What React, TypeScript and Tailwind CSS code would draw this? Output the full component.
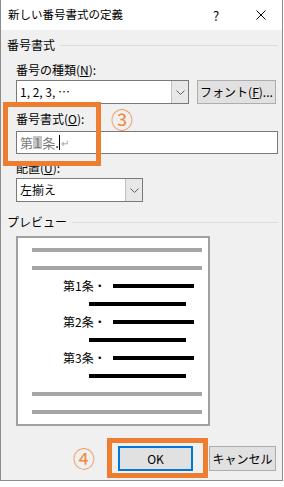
const Chevron = () => (
  <svg width="9" height="5" viewBox="0 0 9 5">
    <path d="M0.5 0.5 L4.5 4.5 L8.5 0.5" fill="none" stroke="#606060" strokeWidth="1" />
  </svg>
);

const GrayLine = () => (
  <div className="flex h-[18px] items-center pl-[14px]">
    <div className="h-[4px] w-[170px] bg-[#a5a5a5]" />
  </div>
);

const BlackLine = () => (
  <div className="flex h-[18px] items-center pl-[71px]">
    <div className="h-[4px] w-[97px] bg-black" />
  </div>
);

const Item = ({ label }: { label: string }) => (
  <div className="flex h-[18px] items-center pl-[45px]">
    <span className="w-[50px] text-[12px] leading-none text-black">{label}・</span>
    <div className="h-[4px] w-[81px] bg-black" />
  </div>
);

const App = () => {
  return (
    <div className="h-[487px] w-[284px] bg-white font-['Noto_Sans_CJK_JP',sans-serif] text-[12px] text-black">
      <div className="relative flex h-[481px] w-[283px] flex-col border-x border-b border-[#8c8c8c]">
        {/* title bar */}
        <div className="flex h-[30px] shrink-0 items-center bg-white pl-[7px] pr-[16px]">
          <span className="text-[11.5px] leading-none">新しい番号書式の定義</span>
          <span className="ml-auto w-[8px] text-center text-[13px] leading-none">?</span>
          <svg className="ml-[36px]" width="10" height="10" viewBox="0 0 10 10">
            <path d="M0.5 0.5 L9.5 9.5 M9.5 0.5 L0.5 9.5" stroke="#000" strokeWidth="1" />
          </svg>
        </div>

        {/* body */}
        <div className="flex flex-1 flex-col bg-[#f0f0f0]">
          <div className="mt-[7px] flex h-4 items-center gap-[5px] pl-[6px] pr-[4px]">
            <span className="leading-none">番号書式</span>
            <div className="h-px flex-1 bg-[#dcdcdc]" />
          </div>

          <div className="mt-[9px] flex h-4 items-center pl-[15px] leading-none">
            番号の種類(<span className="underline">N</span>):
          </div>

          <div className="mt-[2px] flex h-[24px] gap-[8px] pl-[15px]">
            <div className="flex w-[173px] border border-[#7a7a7a] bg-white">
              <span className="flex flex-1 items-center pl-[3px] text-[12px] leading-none">1, 2, 3, …</span>
              <div className="flex w-[17px] items-center justify-center border-l border-[#c0c0c0] bg-[#e8e8e8]">
                <Chevron />
              </div>
            </div>
            <button className="flex w-[79px] items-center justify-center border border-[#adadad] bg-[#e1e1e1] leading-none">
              フォント(<span className="underline">F</span>)...
            </button>
          </div>

          <div className="mt-[7px] flex h-4 items-center pl-[15px] leading-none">
            番号書式(<span className="underline">O</span>):
          </div>

          <div className="ml-[15px] mt-[4px] flex h-[23px] w-[262px] items-center border border-[#7a7a7a] bg-white pl-[3px] text-[13px] leading-none">
            <span className="text-[#7a7a7a]">第</span>
            <span className="bg-[#c4c4c4] px-[1px] text-[#7a7a7a]">1</span>
            <span className="text-[#7a7a7a]">条</span>
            <span>.</span>
            <span className="h-[15px] w-px bg-black" />
            <span className="ml-[1px] text-[10px] text-[#a0a0a0]">↵</span>
          </div>

          <div className="mt-[6px] flex h-4 items-center pl-[15px] leading-none">
            配置(<span className="underline">U</span>):
          </div>

          <div className="ml-[15px] mt-[2px] flex h-[24px] w-[127px] border border-[#7a7a7a] bg-white">
            <span className="flex flex-1 items-center pl-[3px] leading-none">左揃え</span>
            <div className="flex w-[17px] items-center justify-center border-l border-[#c0c0c0] bg-[#e8e8e8]">
              <Chevron />
            </div>
          </div>

          <div className="mt-[12px] flex h-4 items-center gap-[5px] pl-[6px] pr-[4px]">
            <span className="leading-none">プレビュー</span>
            <div className="h-px flex-1 bg-[#dcdcdc]" />
          </div>

          {/* preview */}
          <div className="ml-[15px] mt-[6px] flex h-[190px] w-[194px] flex-col border-2 border-[#a0a0a0] bg-white py-[3px]">
            <GrayLine />
            <GrayLine />
            <Item label="第1条" />
            <BlackLine />
            <Item label="第2条" />
            <BlackLine />
            <Item label="第3条" />
            <BlackLine />
            <GrayLine />
            <GrayLine />
          </div>

          <div className="mt-[20px] flex h-[25px] gap-[16px] pl-[117px]">
            <button className="w-[75px] border-2 border-[#0078d7] bg-[#e1e1e1] text-[12px] leading-none">OK</button>
            <button className="w-[67px] border border-[#adadad] bg-[#e1e1e1] text-[12px] leading-none">キャンセル</button>
          </div>
        </div>

        {/* annotations */}
        <div className="absolute left-[2px] top-[102px] h-[64px] w-[98px] border-[5px] border-[#ed7d31]" />
        <span className="absolute left-[110px] top-[107px] text-[22px] leading-none text-[#ef8a45]">③</span>
        <span className="absolute left-[72px] top-[446px] text-[22px] leading-none text-[#ef8a45]">④</span>
        <div className="absolute left-[106px] top-[438px] h-[40px] w-[101px] border-[5px] border-[#ed7d31]" />
      </div>
    </div>
  );
};

export default App;
